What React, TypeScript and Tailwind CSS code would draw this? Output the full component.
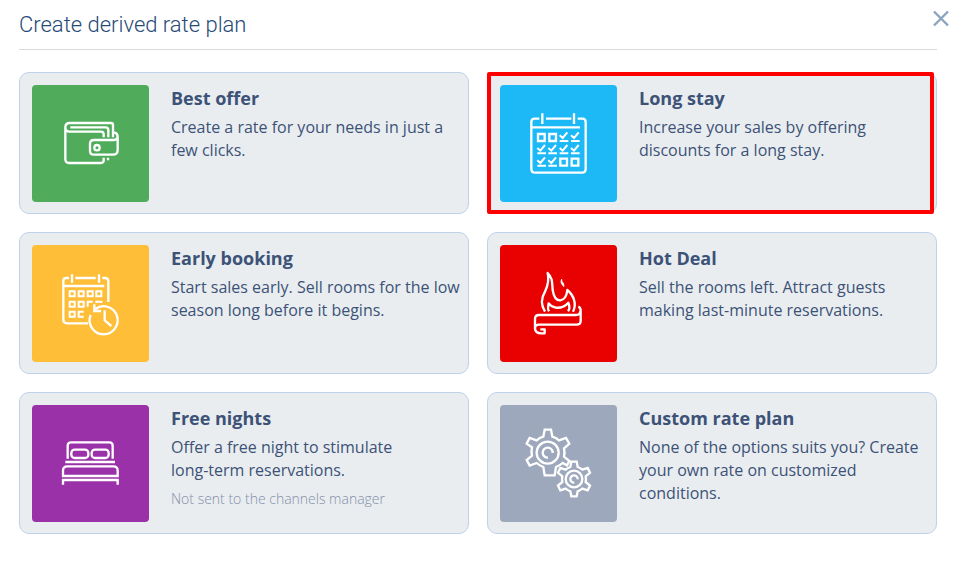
import type { ReactNode } from "react";

interface RatePlan {
  title: string;
  description: string;
  note?: string;
  color: string;
  viewBox: string;
  icon: ReactNode;
  highlighted?: boolean;
}

const WalletIcon = (
  <>
    <path d="M46 80v98q0 11 11 11h96q8 0 8-8v-8M46 82q0-13 13-13h124q6 0 6 6v37M59 95q-13 0-13-13M59 95h94q8 0 8 8v9M61 82h106q8 0 8 8v22" />
    <path d="M192 97q11 2 11 14v39q0 14-14 14h-57q-12 0-12-12v-20q0-12 12-12h61q10-2 10-12M174 173v8" />
    <circle cx="141" cy="143" r="8" />
  </>
);

const CalendarIcon = (
  <>
    <path d="M64 56H50q-10 0-10 10v140q0 12 12 12h139q12 0 12-12V66q0-10-10-10h-14M84 56h76M40 82h146M73 40v32M168 40v32" />
    <path d="M60 102h20v21H60zM94 102h20v21H94zM127 176h20v21h-20zM161 176h20v21h-20z" />
    <path
      d="M125 106l9 8 14-17M125 123h26M159 106l9 8 14-17M159 123h26M58 144l9 8 14-17M58 160h26M91 144l9 8 14-17M91 160h26M125 144l9 8 14-17M125 160h26M159 144l9 8 14-17M159 160h26M58 181l9 8 14-17M58 197h26M91 181l9 8 14-17M91 197h26"
      strokeWidth="6"
    />
  </>
);

const EarlyIcon = (
  <>
    <path d="M57 48H49q-9 0-9 9v115q0 12 12 12h62M76 48h61M157 48h8q10 0 10 10v62M40 72h123M66 37v25M147 37v25" />
    <path
      d="M59 88h15v15H59zM86 88h15v15H86zM113 88h15v15h-15zM139 88h15v15h-15zM59 119h15v15H59zM86 119h15v15H86zM113 134v-15h15M139 123v-4h15v4M59 149h15v15H59zM101 149H86v15h15"
      strokeWidth="6"
    />
    <path d="M122 159a42 42 0 1 0 14-18M133 127v20h20M164 145v30l20 17" />
  </>
);

const HotIcon = (
  <g strokeLinejoin="round">
    <path d="M81 149C65 124 72 104 81 89C90 70 94 54 89 33C105 48 102 65 104 84C107 103 115 116 127 115C139 113 146 103 148 84C167 100 177 125 165 149" />
    <path d="M93 148C87 139 91 132 92 124Q99 134 113 137Q137 139 151 122C156 134 155 142 150 148" />
    <path d="M131 51q-7 12 7 23 1-10-6-16z" fill="white" strokeWidth="2" />
    <path d="M181 134q7 3 7 12v31q0 11-12 11H63q-12 0-12 12 1 15 21 14h8v-12H67M51 201v-30q0-12 12-12h111q13 0 13-12" />
  </g>
);

const BedIcon = (
  <>
    <path d="M53 104V65q0-10 10-10h115q10 0 10 10v39M46 114h149" />
    <rect x="64" y="77" width="51" height="25" rx="10" />
    <rect x="125" y="77" width="51" height="25" rx="10" />
    <path d="M39 156v-16q0-13 13-13h138q13 0 13 13v16zM39 182v-14h164v14" />
  </>
);

const GearsIcon = (
  <>
    <path d="M146 124l-12-7q-9 8-20 12l-4 25H80l-4-25q-11-4-20-12l-21 8-9-17 16-13q-3-12 0-25L26 59l9-17 21 7q9-8 20-11l4-21h19l4 21q11 3 20 11l21-7 10 17-16 14q3 13 0 25l16 13-9 16" />
    <circle cx="89" cy="86" r="33" />
    <path d="M90 101A15 15 0 1 1 104 87" />
    <path d="M160 113h16l3 16q8 3 14 8l16-5 7 14-13 11q2 9 0 17l13 11-7 14-16-5q-6 5-14 8l-3 15h-16l-3-15q-8-3-14-8l-16 5-7-14 13-11q-2-8 0-17l-13-11 7-14 16 5q6-5 14-8z" />
    <circle cx="168" cy="165" r="25" />
    <path d="M169 176A11 11 0 1 1 179 166" />
  </>
);

const ratePlans: RatePlan[] = [
  {
    title: "Best offer",
    description: "Create a rate for your needs in just a few clicks.",
    color: "bg-[#50ac5b]",
    viewBox: "-54 -45 351 351",
    icon: WalletIcon,
  },
  {
    title: "Long stay",
    description: "Increase your sales by offering discounts for a long stay.",
    color: "bg-[#1db9f7]",
    viewBox: "-54 -45 351 351",
    icon: CalendarIcon,
    highlighted: true,
  },
  {
    title: "Early booking",
    description:
      "Start sales early. Sell rooms for the low season long before it begins.",
    color: "bg-[#ffbe38]",
    viewBox: "-54 -51 351 351",
    icon: EarlyIcon,
  },
  {
    title: "Hot Deal",
    description:
      "Sell the rooms left. Attract guests making last-minute reservations.",
    color: "bg-[#e90000]",
    viewBox: "-54 -51 351 351",
    icon: HotIcon,
  },
  {
    title: "Free nights",
    description: "Offer a free night to stimulate\nlong-term reservations.",
    note: "Not sent to the channels manager",
    color: "bg-[#9a31a9]",
    viewBox: "-54 -57 351 351",
    icon: BedIcon,
  },
  {
    title: "Custom rate plan",
    description:
      "None of the options suits you? Create your own rate on customized conditions.",
    color: "bg-[#9da8bc]",
    viewBox: "-54 -57 351 351",
    icon: GearsIcon,
  },
];

const RatePlanCard = ({ plan }: { plan: RatePlan }) => {
  return (
    <button
      type="button"
      className="relative flex min-h-[142px] items-start gap-[22px] rounded-[10px] border border-[#bfd2ea] bg-[#e9edf0] pt-3 pr-1 pb-[11px] pl-3 text-left"
    >
      <span
        className={`size-[117px] shrink-0 overflow-hidden rounded ${plan.color}`}
      >
        <svg
          viewBox={plan.viewBox}
          className="size-full"
          fill="none"
          stroke="white"
          strokeWidth="7"
          aria-hidden="true"
        >
          {plan.icon}
        </svg>
      </span>
      <span className="flex flex-col">
        <span className="text-[18px] leading-[26px] font-bold">
          {plan.title}
        </span>
        <span className="mt-[5px] text-[16px] leading-[23px] whitespace-pre-line">
          {plan.description}
        </span>
        {plan.note && (
          <span className="mt-[7px] text-[14px] leading-[20px] font-light text-[#8490a8]">
            {plan.note}
          </span>
        )}
      </span>
      {plan.highlighted && (
        <span className="absolute -top-px right-[2px] -bottom-px -left-px rounded-xs border-4 border-[#ff0000]" />
      )}
    </button>
  );
};

export default function App() {
  return (
    <main className="relative min-h-screen bg-white pr-[21px] pb-10 pl-[19px] font-['Open_Sans',sans-serif] text-[#3d5277]">
      <header className="border-b border-[#d9dadb] pt-[11px] pb-[10px]">
        <h1 className="font-[Roboto,sans-serif] text-[22px] leading-[28px] font-light text-[#274b77]">
          Create derived rate plan
        </h1>
      </header>
      <button
        type="button"
        aria-label="Close"
        className="absolute top-2 right-2 size-5 text-[#8ba4c0]"
      >
        <svg
          viewBox="0 0 20 20"
          className="size-full"
          fill="none"
          stroke="currentColor"
          strokeWidth="2.400"
          aria-hidden="true"
        >
          <path d="M4 3.500l14 14M18 3.500l-14 14" />
        </svg>
      </button>
      <div className="mt-[22px] grid grid-cols-2 gap-[18px]">
        {ratePlans.map((plan) => (
          <RatePlanCard key={plan.title} plan={plan} />
        ))}
      </div>
    </main>
  );
}
